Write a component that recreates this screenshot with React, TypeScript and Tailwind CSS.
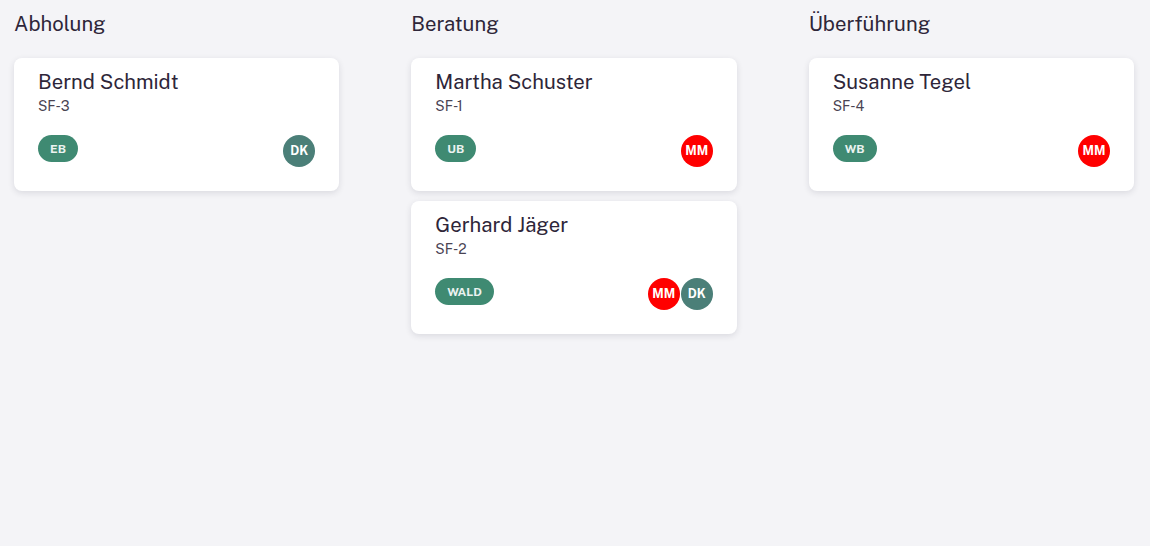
import React from "react";

type Card = {
  name: string;
  code: string;
  tag: string;
  people: string[];
};

type Column = {
  title: string;
  cards: Card[];
};

const columns: Column[] = [
  {
    title: "Abholung",
    cards: [{ name: "Bernd Schmidt", code: "SF-3", tag: "EB", people: ["DK"] }],
  },
  {
    title: "Beratung",
    cards: [
      { name: "Martha Schuster", code: "SF-1", tag: "UB", people: ["MM"] },
      { name: "Gerhard Jäger", code: "SF-2", tag: "WALD", people: ["MM", "DK"] },
    ],
  },
  {
    title: "Überführung",
    cards: [{ name: "Susanne Tegel", code: "SF-4", tag: "WB", people: ["MM"] }],
  },
];

const Avatar: React.FC<{ initials: string }> = ({ initials }) => (
  <div
    className={`w-8 h-8 rounded-full flex items-center justify-center text-[12.5px] font-bold text-white ${
      initials === "MM" ? "bg-[#ff0000]" : "bg-[#4b7f78]"
    }`}
  >
    {initials}
  </div>
);

const TaskCard: React.FC<{ card: Card }> = ({ card }) => (
  <div className="bg-white rounded-lg shadow-[0_2px_6px_rgba(30,30,60,0.12)] px-6 pt-3 pb-6">
    <div className="text-[20.3px] leading-6 text-[#2e2639]">{card.name}</div>
    <div className="text-[14px] leading-5 mt-0.5 text-[#4a4453]">{card.code}</div>
    <div className="flex justify-between items-start mt-[19px]">
      <span className="h-[27px] px-3 rounded-full bg-[#3f8a72] text-white/90 text-[12px] font-bold flex items-center">
        {card.tag}
      </span>
      <div className="flex gap-px">
        {card.people.map((p) => (
          <Avatar key={p} initials={p} />
        ))}
      </div>
    </div>
  </div>
);

export default function App() {
  return (
    <div
      className="min-h-[546px] bg-[#f4f4f7] pl-[14px] pr-4 pt-[10px]"
      style={{ fontFamily: '"Public Sans", Inter, "Noto Sans", sans-serif' }}
    >
      <div className="flex gap-[72px]">
        {columns.map((col) => (
          <div key={col.title} className="flex-1 min-w-0 flex flex-col">
            <h2 className="text-[20.3px] leading-7 text-[#2e2639] mb-[20px]">{col.title}</h2>
            <div className="flex flex-col gap-[10px]">
              {col.cards.map((c) => (
                <TaskCard key={c.name} card={c} />
              ))}
            </div>
          </div>
        ))}
      </div>
    </div>
  );
}
